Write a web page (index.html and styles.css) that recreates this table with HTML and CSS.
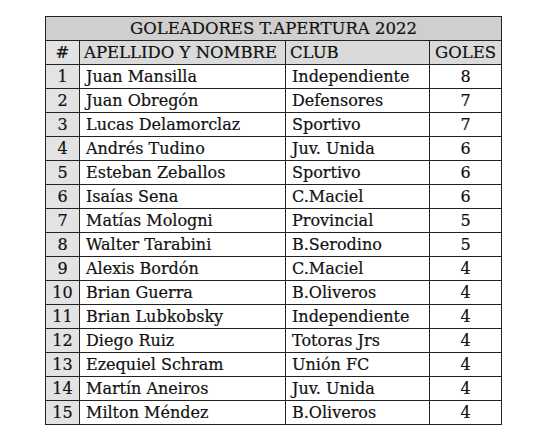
FILE: index.html
```html
<!DOCTYPE html>
<html>
<head>
<meta charset="utf-8">
<link rel="stylesheet" href="styles.css">
</head>
<body>
<div class="page">
<table class="scorers">
<colgroup><col class="c-num"><col class="c-name"><col class="c-club"><col class="c-goals"></colgroup>
<thead>
<tr class="title-row"><th colspan="4">GOLEADORES T.APERTURA 2022</th></tr>
<tr class="head-row"><th class="num">#</th><th class="left">APELLIDO Y NOMBRE</th><th class="left">CLUB</th><th class="goals">GOLES</th></tr>
</thead>
<tbody>
<tr><td class="num">1</td><td>Juan Mansilla</td><td>Independiente</td><td class="goals">8</td></tr>
<tr><td class="num">2</td><td>Juan Obregón</td><td>Defensores</td><td class="goals">7</td></tr>
<tr><td class="num">3</td><td>Lucas Delamorclaz</td><td>Sportivo</td><td class="goals">7</td></tr>
<tr><td class="num">4</td><td>Andrés Tudino</td><td>Juv. Unida</td><td class="goals">6</td></tr>
<tr><td class="num">5</td><td>Esteban Zeballos</td><td>Sportivo</td><td class="goals">6</td></tr>
<tr><td class="num">6</td><td>Isaías Sena</td><td>C.Maciel</td><td class="goals">6</td></tr>
<tr><td class="num">7</td><td>Matías Mologni</td><td>Provincial</td><td class="goals">5</td></tr>
<tr><td class="num">8</td><td>Walter Tarabini</td><td>B.Serodino</td><td class="goals">5</td></tr>
<tr><td class="num">9</td><td>Alexis Bordón</td><td>C.Maciel</td><td class="goals">4</td></tr>
<tr><td class="num">10</td><td>Brian Guerra</td><td>B.Oliveros</td><td class="goals">4</td></tr>
<tr><td class="num">11</td><td>Brian Lubkobsky</td><td>Independiente</td><td class="goals">4</td></tr>
<tr><td class="num">12</td><td>Diego Ruiz</td><td>Totoras Jrs</td><td class="goals">4</td></tr>
<tr><td class="num">13</td><td>Ezequiel Schram</td><td>Unión FC</td><td class="goals">4</td></tr>
<tr><td class="num">14</td><td>Martín Aneiros</td><td>Juv. Unida</td><td class="goals">4</td></tr>
<tr><td class="num">15</td><td>Milton Méndez</td><td>B.Oliveros</td><td class="goals">4</td></tr>
</tbody>
</table>
</div>
</body>
</html>
```
FILE: styles.css
```css
html, body { margin: 0; padding: 0; background: #fff; }
.page { padding: 16px 0 0 45px; }
.scorers {
  border-collapse: collapse;
  table-layout: fixed;
  width: 456px;
  font-family: "DejaVu Serif", serif;
  font-size: 16px;
  color: #111;
  -webkit-text-stroke: 0.2px #111;
}
.c-num { width: 34px; }
.c-name { width: 206px; }
.c-club { width: 144px; }
.c-goals { width: 72px; }
.scorers th, .scorers td {
  border: 1px solid #222;
  height: 23px;
  padding: 0 0 0 6px;
  white-space: nowrap;
  overflow: hidden;
  font-weight: normal;
  text-align: left;
  line-height: 23px;
}
.scorers th { font-size: 16.5px; }
.title-row th { background: #cfcfcf; text-align: center; padding: 0; }
.head-row th { background: #dadada; }
.scorers .num { background: #e3e3e3; text-align: center; padding: 0; }
.scorers .goals { text-align: center; padding: 0; }
.head-row th.left { padding-left: 4px; }
```
